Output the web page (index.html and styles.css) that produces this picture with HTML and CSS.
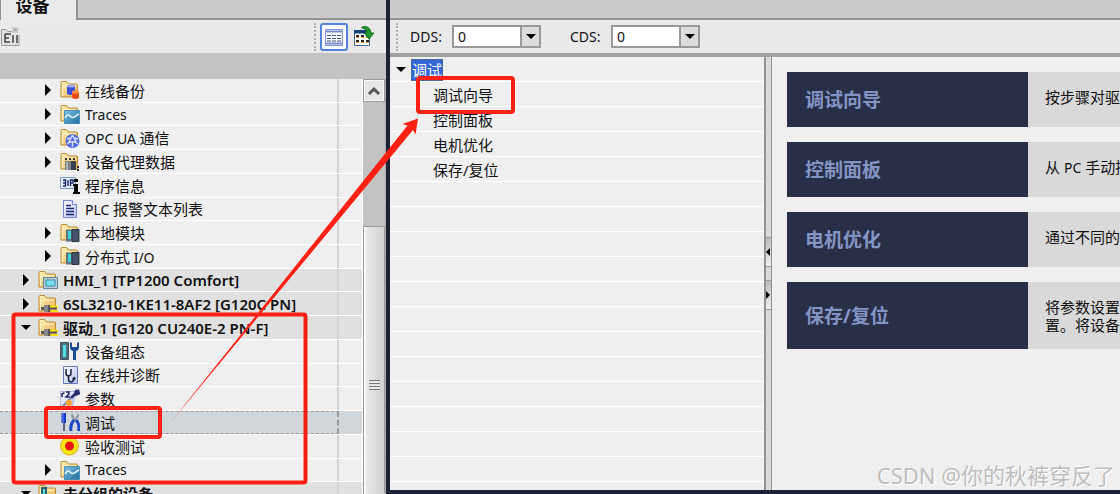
FILE: index.html
```
<!DOCTYPE html>
<html lang="zh-CN">
<head>
    <meta charset="UTF-8">
    <meta name="viewport" content="width=device-width, initial-scale=1.0">
    <title>调试</title>
    <link rel="stylesheet" href="styles.css">
</head>
<body>
    <svg class="defs" aria-hidden="true">
        <defs>
            <linearGradient id="g-folder" x1="0" y1="0" x2="1" y2="1"><stop offset="0" stop-color="#fff0b8"/><stop offset="1" stop-color="#e9b44c"/></linearGradient>
            <linearGradient id="g-blue" x1="0" y1="0" x2="1" y2="1"><stop offset="0" stop-color="#7cc0e4"/><stop offset="1" stop-color="#1b6c9f"/></linearGradient>
            <linearGradient id="g-page" x1="0" y1="0" x2="1" y2="1"><stop offset="0" stop-color="#ffffff"/><stop offset="1" stop-color="#b4c0ee"/></linearGradient>
            <symbol id="i-folder" viewBox="0 0 20 20"><path d="M1 17V2.500Q1 1.500 2 1.500H6.500L8.500 4H16.500Q17.500 4 17.500 5V17Z" fill="url(#g-folder)" stroke="#b98b32"/><path d="M2.500 16V6H16" fill="none" stroke="#fff6d4"/></symbol>
            <symbol id="i-backup" viewBox="0 0 20 20"><use href="#i-folder"/><path d="M7 6v8q4 2 8 0V6Z" fill="#3b50d8"/><ellipse cx="11" cy="6" rx="4" ry="1.500" fill="#9aa9ff"/><path d="M12 12v6q3.500 2 7 0v-6Z" fill="#ee4d16"/><ellipse cx="15.500" cy="12" rx="3.500" ry="1.800" fill="#ff8c4a"/></symbol>
            <symbol id="i-trace" viewBox="0 0 20 20"><use href="#i-folder"/><path d="M4.500 6.500H19.500V19.500H4.500Z" fill="url(#g-blue)" stroke="#4c8fb6"/><path d="M5 14C8 9 9 11 11 13S15 12 19 10" fill="none" stroke="#e6f6ff" stroke-width="1.500"/></symbol>
            <symbol id="i-opc" viewBox="0 0 20 20"><use href="#i-folder"/><circle cx="12.500" cy="13" r="7" fill="#5269e4"/><path d="M12.500 7 9 14H16L12.500 7M7 16 10 14M18 16 15 14M12.500 14V19M7 11 10 10M18 11 15 10" fill="none" stroke="#dce3ff" stroke-width="1.400"/></symbol>
            <symbol id="i-proxy" viewBox="0 0 20 20"><use href="#i-folder"/><path d="M5 6h2v2H5zM9 6h2v2H9zM13 6h2v2h-2zM17 14h2v2h-2zM17 17h2v2h-2z" fill="#333"/><path d="M5 9H11V18H5Z" fill="#7d838b"/><path d="M11 9H16V18H11Z" fill="#38404d"/><path d="M7 10v8" stroke="#d7dde3"/></symbol>
            <symbol id="i-info" viewBox="0 0 20 20"><path d="M.500 2.500H15.500V13.500H.500Z" fill="#e9f3ff" stroke="#7d9bc8"/><path d="M3 5H5.500V8H3M3 11H5.500V8M8 5V11M10.500 11V5H13V8H10.500" fill="none" stroke="#1c2a66" stroke-width="1.400"/><path d="M14 4h4v3h-4zM13 9h5v8h2v2h-7v-2h1v-6h-1z" fill="#080808"/></symbol>
            <symbol id="i-list" viewBox="0 0 20 20"><path d="M3.500 1.500H12.500L16.500 5.500V18.500H3.500Z" fill="url(#g-page)" stroke="#7684cd"/><path d="M12.500 1.500V5.500H16.500" fill="#fff" stroke="#7684cd"/><path d="M6 6.500h5M6 9.500h8M6 12.500h8M6 15.500h8" stroke="#252b72" stroke-width="1.500"/></symbol>
            <symbol id="i-module" viewBox="0 0 20 20"><use href="#i-folder"/><path d="M6 6.500H12V18.500H6Z" fill="#5f7480"/><path d="M8 8h3v8H8z" fill="#38d6d8"/><path d="M12 6.500H19V18.500H12Z" fill="#455168" stroke="#303746"/></symbol>
            <symbol id="i-hmi" viewBox="0 0 20 20"><use href="#i-folder"/><path d="M5.500 7.500H19.500V18.500H5.500Z" fill="#b4c9d8" stroke="#66849b"/><path d="M8 10H17V16H8Z" fill="#77e0ef" stroke="#3f8eaa"/></symbol>
            <symbol id="i-drive" viewBox="0 0 20 20"><use href="#i-folder"/><path d="M3 13h3v-2h6v7H6v-2H3z" fill="#555"/><path d="M7 11v7M9 11v7" stroke="#bbb"/><path d="M12 11.500H20V14H12ZM13 16H20V18H13Z" fill="#f5e410"/><path d="M11 14.500H19" stroke="#505662" stroke-width="2"/></symbol>
            <symbol id="i-config" viewBox="0 0 20 20"><path d="M.500 1.500H8.500V18.500H.500Z" fill="#526e7a" stroke="#40545e"/><path d="M3 4H6V16H3Z" fill="#4ce1e2"/><path d="M10 1V6Q10 9 13 10V19H16V10Q19 9 19 6V1L17 2V6H12V2Z" fill="#1c4d91"/></symbol>
            <symbol id="i-diag" viewBox="0 0 20 20"><path d="M3.500 1.500H17.500V18.500H3.500Z" fill="url(#g-page)" stroke="#6876ba"/><path d="M6 4V8Q6 11 8.500 11T11 8V4M8.500 11V14Q8.500 17 11 17T13.500 14" fill="none" stroke="#171d38" stroke-width="1.500"/><circle cx="14" cy="13.500" r="1.500" fill="#171d38"/></symbol>
            <symbol id="i-param" viewBox="0 0 20 20"><path d="M.500 2.500H16L12 18.500H.500Z" fill="url(#g-page)" stroke="#aab4dc"/><path d="M2 8V4M2 5Q3 4 4.500 4M6 3H9V5L6 8H10" fill="none" stroke="#202060" stroke-width="1.500"/><path d="M19 1 11 9M20 4 15 6M17 1 15 4" stroke="#26306e" stroke-width="2.500"/><path d="M11 9 3 17" stroke="#838896" stroke-width="2"/><circle cx="9" cy="14" r="3" fill="#ffa42c"/></symbol>
            <symbol id="i-tools" viewBox="0 0 20 20"><path d="M1.500 1H6V11H1.500Z" fill="#1737c8"/><path d="M3 1V11" stroke="#6d8cff"/><path d="M3 11V19H5V11Z" fill="#5b6275"/><path d="M12 1 15 7 18 1 19 4 16 9H14L11 4Z" fill="#8b93a2"/><path d="M14 8Q10 12 11 19M16 8Q20 12 18.500 19" fill="none" stroke="#1c46c7" stroke-width="3"/></symbol>
            <symbol id="i-test" viewBox="0 0 20 20"><circle cx="9.500" cy="10" r="9" fill="#f7e615" stroke="#d2b31c"/><circle cx="9.500" cy="10" r="4.500" fill="#e7160c"/></symbol>
            <symbol id="i-group" viewBox="0 0 20 20"><use href="#i-folder"/><path d="M3 3H9V18H3Z" fill="#33626d"/><path d="M5 5h2v10H5z" fill="#55dde4"/></symbol>
            <symbol id="i-right" viewBox="0 0 12 12"><path d="M3 0 9 6 3 12Z" fill="#000"/></symbol>
            <symbol id="i-down" viewBox="0 0 12 12"><path d="M1 3H11L6 8Z" fill="#000"/></symbol>
        </defs>
    </svg>

    <div class="app">
        <section class="project">
            <div class="tabs"><button class="tab" type="button">设备</button></div>
            <div class="toolbar">
                <button class="tool tool-new" type="button" aria-label="新建">
                    <svg width="22" height="22" viewBox="0 0 22 22"><path d="M1.500 19V3.500H6L8 5.500H12M1.500 19.500H19V9" fill="#e2e2e2" stroke="#999"/><path d="M5 8h6M5 8v8h5M5 12h4M13 9v8M17 9v8" stroke="#454545" stroke-width="1.500" fill="none"/><path d="M15 1V7M12 4H19M12 1 18 7M18 1 12 7" stroke="#aaa"/></svg>
                </button>
                <span class="grip"></span>
                <button class="tool tool-on" type="button" aria-label="详细视图">
                    <svg width="20" height="20" viewBox="0 0 20 20"><path d="M1.500 2.500H18.500V18.500H1.500Z" fill="#f6f8ff" stroke="#8494cf"/><path d="M2 4.500H18M2 16.500H18" stroke="#7a8cc8" stroke-width="2"/><path d="M3 8.500H17M3 11.500H17M3 14H17" stroke="#4c5470" stroke-dasharray="4 1"/></svg>
                </button>
                <button class="tool" type="button" aria-label="在编辑器中显示">
                    <svg width="22" height="22" viewBox="0 0 22 22"><path d="M1.500 5.500H16.500V19.500H1.500Z" fill="#fff" stroke="#456a91"/><path d="M1 4H13V7.500H1Z" fill="#123e72"/><path d="M3 9h3v3H3zM8 9h3v3H8zM13 9h3v3h-3zM3 14h3v3H3zM8 14h3v3H8zM13 14h3v3h-3z" fill="#26232c"/><path d="M3 11h3v1H3zM8 11h3v1H8zM13 11h3v1h-3zM3 16h3v1H3zM8 16h3v1H8zM13 16h3v1h-3z" fill="#f99b20"/><path d="M9 1Q17-1 18 7H21L16 13 11 7H14Q14 3 9 2Z" fill="#24962e" stroke="#17711f"/></svg>
                </button>
            </div>
            <div class="band"></div>
            <div class="browser">
                <ul class="tree">
                    <li class="row"><div class="cell"><button class="expander" type="button" aria-label="展开"><svg><use href="#i-right"/></svg></button><svg class="icon"><use href="#i-backup"/></svg><a href="#" class="zh">在线备份</a></div></li>
                    <li class="row"><div class="cell"><button class="expander" type="button" aria-label="展开"><svg><use href="#i-right"/></svg></button><svg class="icon"><use href="#i-trace"/></svg><a href="#">Traces</a></div></li>
                    <li class="row"><div class="cell"><button class="expander" type="button" aria-label="展开"><svg><use href="#i-right"/></svg></button><svg class="icon"><use href="#i-opc"/></svg><a href="#">OPC UA <span class="zh">通信</span></a></div></li>
                    <li class="row"><div class="cell"><button class="expander" type="button" aria-label="展开"><svg><use href="#i-right"/></svg></button><svg class="icon"><use href="#i-proxy"/></svg><a href="#" class="zh">设备代理数据</a></div></li>
                    <li class="row"><div class="cell leaf"><svg class="icon"><use href="#i-info"/></svg><a href="#" class="zh">程序信息</a></div></li>
                    <li class="row"><div class="cell leaf"><svg class="icon"><use href="#i-list"/></svg><a href="#">PLC <span class="zh">报警文本列表</span></a></div></li>
                    <li class="row"><div class="cell"><button class="expander" type="button" aria-label="展开"><svg><use href="#i-right"/></svg></button><svg class="icon"><use href="#i-module"/></svg><a href="#" class="zh">本地模块</a></div></li>
                    <li class="row"><div class="cell"><button class="expander" type="button" aria-label="展开"><svg><use href="#i-right"/></svg></button><svg class="icon"><use href="#i-module"/></svg><a href="#"><span class="zh">分布式</span> I/O</a></div></li>
                    <li class="row device"><div class="cell"><button class="expander" type="button" aria-label="展开"><svg><use href="#i-right"/></svg></button><svg class="icon"><use href="#i-hmi"/></svg><a href="#">HMI_1 [TP1200 Comfort]</a></div></li>
                    <li class="row device"><div class="cell"><button class="expander" type="button" aria-label="展开"><svg><use href="#i-right"/></svg></button><svg class="icon"><use href="#i-drive"/></svg><a href="#">6SL3210-1KE11-8AF2 [G120C PN]</a></div></li>
                    <li class="row device"><div class="cell"><button class="expander" type="button" aria-label="折叠"><svg><use href="#i-down"/></svg></button><svg class="icon"><use href="#i-drive"/></svg><a href="#">驱动_1 [G120 CU240E-2 PN-F]</a></div></li>
                    <li class="row"><div class="cell leaf"><svg class="icon"><use href="#i-config"/></svg><a href="#" class="zh">设备组态</a></div></li>
                    <li class="row"><div class="cell leaf"><svg class="icon"><use href="#i-diag"/></svg><a href="#" class="zh">在线并诊断</a></div></li>
                    <li class="row"><div class="cell leaf"><svg class="icon"><use href="#i-param"/></svg><a href="#" class="zh">参数</a></div></li>
                    <li class="row selected"><div class="cell leaf"><svg class="icon"><use href="#i-tools"/></svg><a href="#" class="zh">调试</a></div></li>
                    <li class="row"><div class="cell leaf"><svg class="icon"><use href="#i-test"/></svg><a href="#" class="zh">验收测试</a></div></li>
                    <li class="row"><div class="cell"><button class="expander" type="button" aria-label="展开"><svg><use href="#i-right"/></svg></button><svg class="icon"><use href="#i-trace"/></svg><a href="#">Traces</a></div></li>
                    <li class="row device"><div class="cell"><button class="expander" type="button" aria-label="折叠"><svg><use href="#i-down"/></svg></button><svg class="icon"><use href="#i-group"/></svg><a href="#">未分组的设备</a></div></li>
                </ul>
                <div class="scrollbar">
                    <button class="scroll-up" type="button" aria-label="向上滚动"><svg width="14" height="10" viewBox="0 0 14 10"><path d="M2 8 7 3 12 8" fill="none" stroke="#555" stroke-width="3"/></svg></button>
                    <div class="thumb"><span class="thumb-grip"></span></div>
                </div>
            </div>
        </section>

        <main class="work">
            <div class="tabs"></div>
            <div class="toolbar">
                <span class="grip"></span>
                <label for="dds">DDS:</label>
                <span class="combo"><select id="dds"><option>0</option></select><svg><use href="#i-down"/></svg></span>
                <label for="cds">CDS:</label>
                <span class="combo"><select id="cds"><option>0</option></select><svg><use href="#i-down"/></svg></span>
            </div>
            <div class="content">
                <ul class="nav">
                    <li class="nav-root"><button class="expander" type="button" aria-label="折叠"><svg><use href="#i-down"/></svg></button><a href="#">调试</a></li>
                    <li><a href="#">调试向导</a></li>
                    <li><a href="#">控制面板</a></li>
                    <li><a href="#">电机优化</a></li>
                    <li><a href="#">保存/复位</a></li>
                </ul>
                <div class="splitter">
                    <button type="button" aria-label="向左折叠"><svg width="4" height="8" viewBox="0 0 4 8"><path d="M4 0V8L0 4Z"/></svg></button>
                    <button type="button" aria-label="向右展开"><svg width="4" height="8" viewBox="0 0 4 8"><path d="M0 0V8L4 4Z"/></svg></button>
                </div>
                <div class="cards">
                    <div class="card"><a href="#">调试向导</a><p>按步骤对驱</p></div>
                    <div class="card"><a href="#">控制面板</a><p>从 <span class="latin">PC</span> 手动控</p></div>
                    <div class="card"><a href="#">电机优化</a><p>通过不同的</p></div>
                    <div class="card"><a href="#">保存/复位</a><p>将参数设置<br>置。将设备</p></div>
                </div>
            </div>
        </main>

        <svg class="marks" aria-hidden="true">
            <g fill="none" stroke="#ff2014" stroke-width="4">
                <rect x="13.500" y="314.500" width="292" height="168" rx="2"/>
                <rect x="46" y="408" width="114" height="29" rx="2"/>
                <rect x="418" y="78" width="95" height="34" rx="2"/>
            </g>
            <path d="M171 422 407.500 125.500 402.500 124 418 118.500 415.500 134.500 413 130Z" fill="#ff2014"/>
        </svg>
        <div class="watermark">CSDN @你的秋裤穿反了</div>
    </div>
</body>
</html>
```

FILE: styles.css
```
* { box-sizing: border-box; }
body { margin: 0; font-family: "Noto Sans", "Noto Sans CJK SC", sans-serif; font-size: 14px; color: #111; background-color: #efefef; }
ul { list-style: none; margin: 0; padding: 0; }
a { color: inherit; text-decoration: none; white-space: nowrap; }
button { padding: 0; border: none; background: none; font-family: inherit; color: inherit; }
.defs { position: absolute; width: 0; height: 0; }
.zh { font-size: 15px; }

.app { position: relative; display: flex; height: 100vh; overflow: hidden; }
.project { flex: 0 0 386px; display: flex; flex-direction: column; min-height: 0; }
.work { flex: 1; min-width: 0; display: flex; flex-direction: column; border: solid #1a2233; border-width: 0 0 4px 4px; }

/* tabs and toolbars */
.tabs { flex: 0 0 20px; display: flex; align-items: flex-end; background-color: #cbcbcb; border-bottom: 2px solid #929292; }
.tab { width: 78px; height: 20px; margin-bottom: -2px; padding: 0 12px 8px 0; font-size: 17px; line-height: 12px; font-weight: bold; background-color: #eaeaea; border: solid #929292; border-width: 0 2px 0 1px; }
.toolbar { flex: 0 0 33px; display: flex; align-items: center; background-color: #e9e9e9; }
.project .toolbar { padding-right: 8px; }
.tool { display: flex; align-items: center; justify-content: center; width: 28px; height: 28px; }
.tool-new { width: 22px; margin-right: auto; }
.tool-on { margin: 0 2px 0 4px; border: 2px solid #5580dd; border-radius: 3px; background-color: #f8faff; }
.grip { width: 2px; height: 28px; border-left: 2px dotted #b0b0b0; }
.work .toolbar { padding-left: 6px; }
.work .toolbar label { margin-left: 12px; width: 42px; }
.work .combo + label { margin-left: 29px; width: 41px; }
.combo { position: relative; width: 89px; height: 23px; }
.combo select { width: 100%; height: 100%; padding: 0 4px; appearance: none; font-family: inherit; font-size: 14px; color: #111; border: 2px solid #999; border-radius: 0; background: linear-gradient(to right, #fff 66px, #999 66px, #999 68px, #dcdcdc 68px); }
.combo svg { position: absolute; right: 4px; top: 6px; width: 12px; height: 12px; pointer-events: none; }

/* project tree */
.band { flex: 0 0 26px; background-color: #c3c3c3; }
.browser { flex: 1; min-height: 0; display: flex; }
.tree { flex: 1; min-width: 0; height: calc(100% + 12px); display: flex; flex-direction: column; background-color: #efefef; }
.row { flex: 1; min-height: 0; display: flex; padding-right: 23px; border-bottom: 1px solid #fff; border-right: 1px solid #fff; }
.cell { flex: 1; display: flex; align-items: center; padding-left: 42px; border-right: 2px solid #d2d2d2; }
.leaf { padding-left: 60px; }
.expander { display: flex; width: 12px; height: 12px; margin-right: 6px; }
.expander svg { width: 12px; height: 12px; }
.icon { flex: none; width: 20px; height: 20px; margin-right: 5px; }
.device { background-color: #e0e0e0; font-size: 15px; font-weight: 600; }
.device .cell { padding-left: 20px; }
.selected { background-color: #d1d6db; }
.selected .cell { border: 1px dashed #999; border-left: none; border-right-width: 2px; }

.scrollbar { flex: 0 0 23px; display: flex; flex-direction: column; background-color: #c3c3c3; border-right: 1px solid #aaa; }
.scroll-up { flex: 0 0 23px; display: flex; align-items: center; justify-content: center; border: 1px solid #999; background-color: #e6e6e6; box-shadow: inset 0 0 0 1px #fafafa; }
.thumb { flex: 1; display: flex; align-items: center; justify-content: center; margin: 124px 0 -50px; border: 1px solid #999; background: linear-gradient(to right, #fff 1px, #e9e9e9 2px, #d0d0d0); }
.thumb-grip { width: 11px; height: 10px; background: repeating-linear-gradient(#777 0, #777 1px, #e8e8e8 1px, #e8e8e8 3px); border-bottom: 1px solid #777; }

/* commissioning */
.content { flex: 1; min-height: 0; display: flex; border-top: 4px solid #a0a0a0; }
.nav { flex: 0 0 374px; font-size: 15px; background: repeating-linear-gradient(#efefef 0, #efefef 24px, #fff 24px, #fff 25px); }
.nav li { display: flex; align-items: center; height: 25px; padding-left: 43px; }
.nav .nav-root { padding-left: 5px; }
.nav-root .expander { margin-right: 4px; }
.nav-root a { padding: 0 1px; line-height: 22px; color: #fff; background-color: #3467d6; outline: 1px dotted #666; outline-offset: -1px; }
.splitter { flex: 0 0 8px; display: flex; flex-direction: column; gap: 13px; padding-top: 180px; background-color: #dadada; border: solid #929292; border-width: 0 1px 0 2px; }
.splitter button { display: flex; align-items: center; height: 30px; border: solid #999; border-width: 1px 0; background: linear-gradient(#bbb, #eee); }
.cards { flex: 1; min-width: 0; display: flex; flex-direction: column; gap: 15px; padding: 15px 0 0 15px; }
.card { display: flex; min-height: 55px; overflow: hidden; background-color: #d9d9d9; }
.card a { flex: 0 0 241px; display: flex; align-items: center; padding-left: 18px; font-size: 19px; line-height: 24px; font-weight: bold; color: #8495c4; background-color: #2a2f48; }
.card p { margin: 0; padding: 16px 0 15px 17px; font-size: 15px; line-height: 18px; white-space: nowrap; }
.latin { font-size: 14px; }

.marks { position: absolute; left: 0; top: 0; width: 100%; height: 100%; pointer-events: none; }
.watermark { position: absolute; right: 5px; bottom: 4px; font-size: 22px; line-height: 30px; color: #bdbdbd; text-shadow: 1px 1px 0 #fff; pointer-events: none; }
```
